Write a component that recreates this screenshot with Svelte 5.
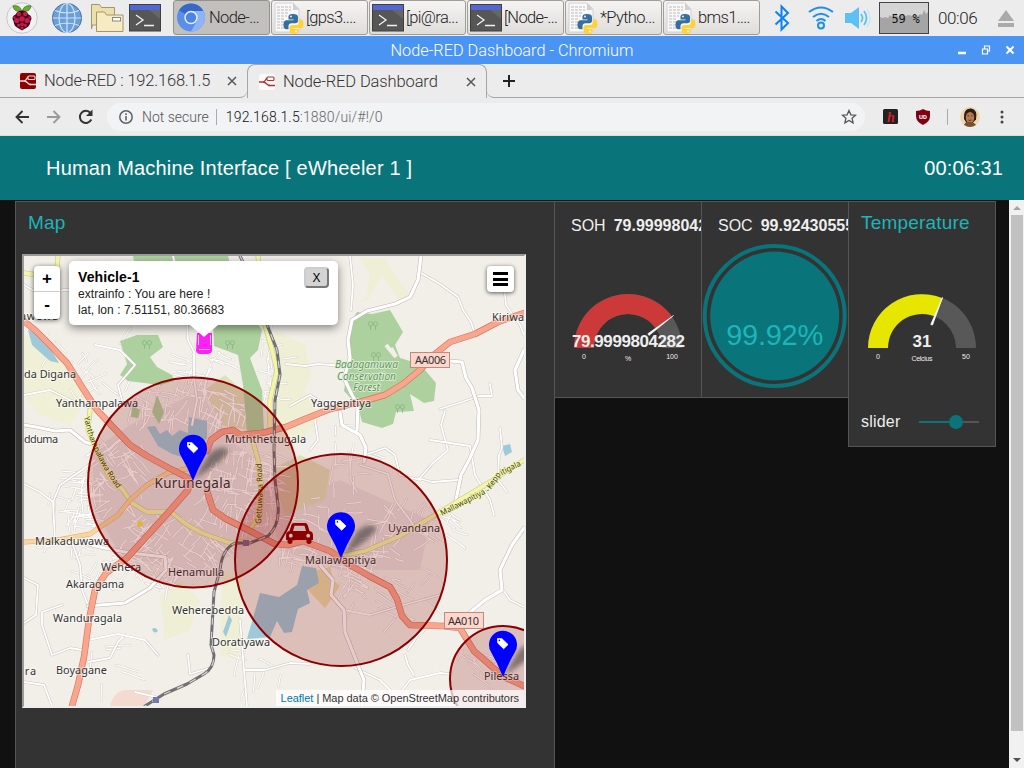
<script>
  const tasks = [
    { icon: 'chromium', label: 'Node-...', active: true },
    { icon: 'python', label: '[gps3....' },
    { icon: 'terminal', label: '[pi@ra...' },
    { icon: 'terminal', label: '[Node-...' },
    { icon: 'python', label: '*Pytho...' },
    { icon: 'python', label: 'bms1....' }
  ];

  // Deterministic side streets for the built-up areas of the map.
  function makeRandom(seed) {
    let s = seed;
    return () => {
      s = (s * 16807) % 2147483647;
      return s / 2147483647;
    };
  }
  function streets(cx, cy, rx, ry, count, seed, base) {
    const rnd = makeRandom(seed);
    let d = '';
    for (let i = 0; i < count; i++) {
      const a = rnd() * Math.PI * 2;
      const q = Math.sqrt(rnd());
      let x = cx + Math.cos(a) * q * rx;
      let y = cy + Math.sin(a) * q * ry;
      let dir = base + (rnd() < 0.5 ? 0 : Math.PI / 2) + (rnd() - 0.5) * 0.25;
      d += `M${x.toFixed(1)} ${y.toFixed(1)}`;
      const n = 2 + Math.floor(rnd() * 2);
      for (let j = 0; j < n; j++) {
        dir += (rnd() - 0.5) * 0.5;
        const l = 3 + rnd() * 7;
        x += Math.cos(dir) * l;
        y += Math.sin(dir) * l;
        d += `L${x.toFixed(1)} ${y.toFixed(1)}`;
      }
    }
    return d;
  }
  const fineStreets = [
    streets(190, 403, 58, 22, 65, 11, 0.3),
    streets(243, 485, 38, 46, 110, 23, 0.2),
    streets(120, 470, 27, 42, 45, 31, 0.9),
    streets(170, 545, 58, 34, 75, 47, 0.7),
    streets(325, 535, 60, 38, 75, 53, 0.1),
    streets(385, 580, 46, 44, 34, 61, 0.5),
    streets(75, 500, 28, 32, 40, 71, 0.1),
    streets(90, 355, 55, 40, 18, 83, 0.8),
    streets(195, 362, 30, 18, 20, 97, 0.4),
    streets(268, 360, 10, 46, 18, 101, 0.1),
    streets(345, 455, 24, 32, 16, 113, 0),
    streets(130, 568, 60, 18, 28, 127, 0.4),
    streets(245, 670, 40, 22, 8, 131, 0.2),
    streets(420, 515, 40, 28, 28, 149, 0.6),
    streets(60, 545, 32, 14, 10, 151, 0.2),
    streets(480, 660, 22, 22, 12, 157, 0.6),
    streets(100, 665, 24, 22, 6, 163, 0.1)
  ].join('');

  const minorRoads = [
    'M173 256L176 268L185 290L188 340L194 352L194 378L197 400L192 425',
    'M350 256L353 285L351 310',
    'M440 409L462 402L479 396L492 396L490 384',
    'M445 411L441 425L448 450L432 464L420 478',
    'M418 478L432 482L458 480',
    'M344 610L370 615L400 606L440 595',
    'M503 590L510 600L524 607',
    'M405 655L408 665L414 675M408 650L418 635L434 623',
    'M24 484L40 492L53 502L55 540M53 502L60 485L82 470L95 460',
    'M24 578L38 585L36 615L24 623',
    'M73 545L80 565L82 590L90 610',
    'M62 605L42 612L42 625L52 655L70 648L82 650',
    'M24 682L44 685L52 706',
    'M88 640L118 634L145 640L158 655',
    'M88 662L110 658L118 642L125 635',
    'M188 655L190 674L210 668M240 620L244 670L247 706',
    'M244 670L265 670L290 663L310 664M135 692L160 698',
    'M355 668L380 680L390 690M395 700L410 680L440 673L450 674',
    'M24 285L50 300L62 290L90 290L110 300L130 298',
    'M95 345L120 350L135 365L118 385L122 400',
    'M24 395L50 390L70 400L90 408',
    'M286 364L305 366L318 364L345 366',
    'M290 406L310 395L318 400M315 420L318 440L310 450',
    'M365 455L385 448L395 455L400 475L420 480',
    'M421 273L440 284L458 297L463 310L471 322L475 334',
    'M504 285L506 305L520 325L524 335',
    'M430 440L470 446L475 475L490 500L494 515',
    'M500 428L502 448L499 455L498 480L507 492',
    'M360 465L388 474L395 500L410 520L416 530'
  ].join('');
  const widerRoads = [
    'M421 256L418 280L410 297L395 304L367 311L352 320L348 340L350 358L344 378L352 395L358 405L357 430',
    'M340 412L342 425L360 435L366 448L364 462',
    'M450 361L462 362L466 378L472 388L479 410L478 440L469 460L461 475L455 505',
    'M524 350L515 370L518 390L524 398',
    'M320 565L333 580L331 595L344 610L345 632L354 655L364 680L362 706',
    'M524 528L512 545L500 570L502 590L485 600L468 614',
    'M24 425L36 427L55 431L70 430L85 442L98 446',
    'M73 539L95 546L130 553L165 557L166 570L150 588L125 603L88 606'
  ].join('');

  const mainRoads = [
    'M24 321L36 331L50 345L67 363L82 387L97 410L112 426L130 445L147 456L167 467L190 479',
    'M524 313L498 322L475 334L450 342L435 354L420 370L403 384L385 395L360 402L330 409L305 419L286 427L262 433L240 435L233 430L222 432L211 440L207 451',
    'M207 491L213 510L226 519L250 531L275 544L288 545L303 541L330 551L350 565L369 576L390 587L397 599L402 616L410 625L443 626L460 628L466 638L474 651L490 665L504 677L524 686',
    'M190 479L188 490L167 514L147 536L127 558L106 573L95 590L89 620L84 657L78 685L72 706'
  ].join('');

  const secondaryRoads =
    'M24 542L58 540L90 534L118 515L130 500L147 485L168 473L190 468';
  const yellowRoads =
    'M24 273L44 276L57 268L58 256M90 410L88 430L100 458L110 478L123 490L132 503L147 512L171 512L186 524L202 533L230 543L250 541M250 529L260 515L262 490L258 460L252 438M258 256L265 325L272 350L277 370L270 400L270 430M340 556L365 551L400 536L430 518L460 500L490 482L524 460';
  const railway =
    'M240 256L249 274L258 300L266 322L277 350L280 375L275 400L274 450L275 480L278 505Q280 525 268 536L250 543L235 543Q222 549 220 570L214 592L211 645L214 655Q214 668 204 674L187 684L164 694L145 706';

  const places = [
    { t: 'Kiriwa', x: 492, y: 321, w: 32 },
    { t: 'da Digana', x: 24, y: 378, w: 52 },
    { t: 'Yanthampalawa', x: 56, y: 407, w: 82 },
    { t: 'dduma', x: 24, y: 443, w: 34 },
    { t: 'Muththettugala', x: 225, y: 443, w: 81 },
    { t: 'Yaggepitiya', x: 311, y: 407, w: 60 },
    { t: 'Uyandana', x: 388, y: 532, w: 52 },
    { t: 'Malkaduwawa', x: 35, y: 545, w: 74 },
    { t: 'Wehera', x: 101, y: 571, w: 40 },
    { t: 'Akaragama', x: 66, y: 588, w: 58 },
    { t: 'Henamulla', x: 168, y: 576, w: 56 },
    { t: 'Wanduragala', x: 53, y: 622, w: 69 },
    { t: 'Weherebedda', x: 172, y: 614, w: 72 },
    { t: 'Doratiyawa', x: 212, y: 646, w: 58 },
    { t: 'ara', x: 18, y: 675, w: 18 },
    { t: 'Boyagane', x: 56, y: 674, w: 51 },
    { t: 'Mallawapitiya', x: 305, y: 564, w: 71 },
    { t: 'Pilessa', x: 484, y: 680, w: 35 },
    { t: 'awewa', x: 20, y: 320, w: 38 }
  ];
  const zones = [
    { x: 193, y: 482.5, r: 105 },
    { x: 341, y: 560, r: 106 },
    { x: 503, y: 679, r: 53 }
  ];
  const pins = [
    { x: 193, y: 434 },
    { x: 341, y: 511.5 },
    { x: 503, y: 630 }
  ];
  const trees = [
    [147, 345], [230, 345], [373, 326], [376, 357], [400, 409]
  ];
</script>

{#snippet terminalIcon()}
  <svg width="32" height="28" viewBox="0 0 32 28">
    <rect x=".5" y=".5" width="31" height="26.5" fill="#565656" stroke="#3f3f3f" />
    <path d="M20 6h11v9z" fill="#666" />
    <rect x="1" y="1" width="30" height="5" fill="#5267d4" />
    <path d="M7 11l7 5-7 5M15 21.500h10" fill="none" stroke="#f2f2f2" stroke-width="1.300" />
  </svg>
{/snippet}

{#snippet chromiumIcon()}
  <svg width="28" height="29" viewBox="0 0 28 29">
    <circle cx="14" cy="14.500" r="14" fill="#5b8ee8" />
    <path d="M14 14.500L2 7.300A14 14 0 0 1 26 7.300z" fill="#3767c8" />
    <path d="M14 8h12.400A14 14 0 0 1 14 28.500L20 18z" fill="#8eb4f5" />
    <circle cx="14" cy="14.500" r="6.700" fill="#e9f1fd" />
    <circle cx="14" cy="14.500" r="5.200" fill="#4b84e6" />
  </svg>
{/snippet}

{#snippet pythonIcon()}
  <svg width="30" height="32" viewBox="0 0 30 32">
    <path d="M1 1h18l6 6v23H1z" fill="#f8f8f8" stroke="#d2d2d2" />
    <path d="M19 1l6 7h-6z" fill="#cfcfcf" />
    <path d="M3 5h14M3 8h14M3 11h11M3 14h10M3 17h7M3 20h8M3 23h7M3 26h12" stroke="#bbb" stroke-dasharray="3 1" />
    <path d="M19 12c-4 0-4.500 1.500-4.500 3v2.500h5v.8h-7c-2 0-3 1.500-3 4.500s1 4.500 3 4.500h2v-3c0-2 1-3 3-3h4c1.700 0 2.500-1 2.500-2.500V15c0-2-1.500-3-5-3z" fill="#356f9f" />
    <path d="M20 32c4 0 4.500-1.500 4.500-3v-2h-5v-.8h7c2 0 3-1.500 3-4.500s-1-4.500-3-4.500h-1.500v2.800c0 2-1 3-3 3h-4c-1.700 0-2.500 1-2.500 2.500V29c0 2 1.500 3 4.500 3z" fill="#ffd23c" />
    <circle cx="17" cy="14.500" r=".9" fill="#fff" />
    <circle cx="22" cy="29.500" r=".9" fill="#fff" />
  </svg>
{/snippet}

{#snippet nodeRed(fg, bg)}
  <svg width="16" height="16" viewBox="0 0 16 16">
    <rect width="16" height="16" rx="2" fill={bg} />
    <path d="M0 8h4c3 0 2-4 5-4M4 8c4 0 3 3.500 7 3.500" fill="none" stroke={fg} stroke-width="1.300" />
    <rect x="8" y="3" width="7" height="3.500" rx="1" fill={bg} stroke={fg} stroke-width="1.100" />
    <path d="M9.500 11.500H16" stroke={fg} stroke-width="1.500" />
  </svg>
{/snippet}

<div class="screen">
  <div class="taskbar">
    <div class="launch">
      <svg width="32" height="32" viewBox="0 0 32 32">
        <circle cx="16" cy="16" r="15.300" fill="#f1f1f1" stroke="#c4c8cd" />
        <path d="M15.500 9.500C9 10 7.500 7 7 3.800c4-.5 8 .5 8.500 5.700zM16.500 9.500c6.500.500 8-2.500 8.500-5.700-4-.5-8 .5-8.500 5.700z" fill="#6aae2e" stroke="#27591b" stroke-width=".6" />
        <path d="M16 8.500c-3 0-5 1.500-6.500 4C6 14 6 17 7.500 19c.5 4 2 6 4.500 7l4 2.500 4-2.500c2.500-1 4-3 4.500-7 1.500-2 1.500-5-2-6.500-1.500-2.500-3.500-4-6.500-4z" fill="#42091b" />
        <g fill="#c51a4a">
          <circle cx="12.800" cy="12" r="2.300" /><circle cx="19.200" cy="12" r="2.300" />
          <circle cx="16" cy="17" r="2.800" /><circle cx="10.800" cy="18.500" r="2.600" /><circle cx="21.200" cy="18.500" r="2.600" />
          <circle cx="16" cy="22.300" r="1.900" /><circle cx="12.600" cy="23.300" r="1.600" /><circle cx="19.400" cy="23.300" r="1.600" />
          <circle cx="16" cy="26" r="1.500" /><circle cx="8.400" cy="15.500" r="1.200" /><circle cx="23.600" cy="15.500" r="1.200" />
        </g>
      </svg>
      <svg width="32" height="32" viewBox="0 0 32 32">
        <circle cx="16" cy="16" r="14.600" fill="#6a9fd8" stroke="#46719f" />
        <path d="M16 1.500v29M1.500 16h29M4 8.500q12 5 24 0M4 23.500q12-5 24 0" fill="none" stroke="#cfe2f7" stroke-width="1.200" />
        <ellipse cx="16" cy="16" rx="8" ry="14.500" fill="none" stroke="#cfe2f7" stroke-width="1.200" />
      </svg>
      <svg width="34" height="30" viewBox="0 0 34 30">
        <path d="M1.500 26V1.500h8l2 3h13V22h-22z" fill="#eddfad" stroke="#a3966c" />
        <path d="M6.500 28.500V9h8l2 3h16.500v16.500z" fill="#f6ebc1" stroke="#a3966c" />
        <rect x="22.500" y="14.500" width="8" height="3.500" fill="#fff" stroke="#888" />
      </svg>
      {@render terminalIcon()}
    </div>
    <div class="tasks">
      {#each tasks as task}
        <div class="task" class:active={task.active}>
          {#if task.icon === 'chromium'}{@render chromiumIcon()}{:else if task.icon === 'python'}{@render pythonIcon()}{:else}{@render terminalIcon()}{/if}
          <span>{task.label}</span>
        </div>
      {/each}
    </div>
    <div class="tray">
      <svg width="16" height="28" viewBox="0 0 16 28"><path d="M1.500 7.500L14 19l-6.500 6.500v-23L14 9 1.500 20.500" fill="none" stroke="#0a84f5" stroke-width="2" /></svg>
      <svg width="26" height="24" viewBox="0 0 26 24" fill="none" stroke="#1d8ff0" stroke-width="2">
        <path d="M1 6Q13-3 25 6M5 11q8-6.500 16 0M8.500 15q4.500-4 9 0" /><circle cx="13" cy="19.500" r="3" />
      </svg>
      <svg width="26" height="22" viewBox="0 0 26 22">
        <path d="M0 6h6l8-6v22l-8-6H0z" fill="#5cc0f5" />
        <path d="M16 7q3 4 0 8M19 4q5 7 0 14" fill="none" stroke="#5cc0f5" stroke-width="1.800" />
        <path d="M22 2q6 9 0 18" fill="none" stroke="#cde6f5" stroke-width="1.500" />
      </svg>
      <div class="cpu">
        <svg width="48" height="30" viewBox="0 0 48 30"><path d="M0 30V14l3 1 2-1 3 1 2-3 2 2 2-1 2-3 2 4 4-2 3 1 4-1 3 1 3-2 3 2 2-2 2 1 2-5 2 4 2-2V30z" fill="#a5a5a5" /></svg>
        <span>59 %</span>
      </div>
      <span class="clock">00:06</span>
      <svg width="16" height="17" viewBox="0 0 16 17"><path d="M8 0l8 11H0zM0 13h16v4H0z" fill="#aaa" /></svg>
    </div>
  </div>

  <div class="titlebar">
    <span>Node-RED Dashboard - Chromium</span>
    <svg width="56" height="10" viewBox="0 0 56 10" fill="none" stroke="#fff" stroke-width="2">
      <path d="M0 8h8" stroke-width="2.500" />
      <path d="M26.500 3.500V1h5v5h-2.500M24.500 4h5v5h-5z" stroke-width="1.200" />
      <path d="M48.500 1.500l7 7M55.500 1.500l-7 7" />
    </svg>
  </div>

  <div class="tabs">
    <div class="tab idle">
      {@render nodeRed('#f3dada', '#8f0000')}
      <span>Node-RED : 192.168.1.5</span>
      <svg class="close" width="10" height="10" viewBox="0 0 10 10"><path d="M1 1l8 8M9 1L1 9" stroke="#555" stroke-width="1.500" /></svg>
    </div>
    <div class="tab current">
      {@render nodeRed('#a33', '#fafafa')}
      <span>Node-RED Dashboard</span>
      <svg class="close" width="10" height="10" viewBox="0 0 10 10"><path d="M1 1l8 8M9 1L1 9" stroke="#555" stroke-width="1.500" /></svg>
    </div>
    <div class="newtab"><svg width="12" height="12" viewBox="0 0 12 12"><path d="M6 0v12M0 6h12" stroke="#222" stroke-width="2" /></svg></div>
  </div>

  <div class="toolbar">
    <svg width="14" height="14" viewBox="0 0 14 14"><path d="M14 7H1.500M7.500 1L1.500 7l6 6" fill="none" stroke="#333" stroke-width="1.900" /></svg>
    <svg width="14" height="14" viewBox="0 0 14 14"><path d="M0 7h12.500M6.500 1l6 6-6 6" fill="none" stroke="#9a9a9a" stroke-width="1.900" /></svg>
    <svg width="16" height="16" viewBox="0 0 16 16"><path d="M13.300 10.500A6 6 0 1 1 12.500 4" fill="none" stroke="#333" stroke-width="2" /><path d="M14.500.5v6.500H8z" fill="#333" /></svg>
    <div class="omni">
      <svg width="14" height="14" viewBox="0 0 14 14"><circle cx="7" cy="7" r="6.200" fill="none" stroke="#5f6368" stroke-width="1.500" /><path d="M7 6v4.500M7 3.300V5" stroke="#5f6368" stroke-width="1.600" /></svg>
      <span class="insecure">Not secure</span>
      <i></i>
      <span class="url">192.168.1.5<em>:1880/ui/#!/0</em></span>
      <svg class="star" width="16" height="16" viewBox="0 0 16 16"><path d="M8 1.500l1.900 4.300 4.700.4-3.500 3.100 1 4.600L8 11.500l-4.100 2.400 1-4.600L1.400 6.200l4.700-.4z" fill="none" stroke="#555" stroke-width="1.300" /></svg>
    </div>
    <svg width="15" height="15" viewBox="0 0 15 15"><rect width="15" height="15" rx="1.500" fill="#222" /><text x="4" y="12.500" font-family="Liberation Serif" font-style="italic" font-weight="700" font-size="14" fill="#d11f2d">h</text></svg>
    <svg width="16" height="16" viewBox="0 0 16 16"><path d="M8 0q3 2 7 2v5q0 6-7 9-7-3-7-9V2q4 0 7-2z" fill="#800010" /><text x="4" y="9.500" font-family="Roboto" font-weight="700" font-size="6" fill="#fff">UD</text></svg>
    <i class="rule"></i>
    <svg class="face" width="20" height="20" viewBox="0 0 20 20">
      <circle cx="10" cy="10" r="10" fill="#ecd7ae" />
      <path d="M4 12Q3 1 11 1.500q7 1 5 11l-4 4H7z" fill="#2c1d18" />
      <ellipse cx="10" cy="10.500" rx="4.200" ry="5.500" fill="#b97a50" />
      <path d="M4 18q2-4 6-3 4 0 6 3-6 4-12 0z" fill="#77502f" />
      <path d="M7.500 8.800h1.500M11 8.800h1.500M8.500 13q1.500 1 3 0" fill="none" stroke="#4a1f17" stroke-width=".8" />
    </svg>
    <svg width="4" height="14" viewBox="0 0 4 14" fill="#444"><circle cx="2" cy="2" r="1.500" /><circle cx="2" cy="7" r="1.500" /><circle cx="2" cy="12" r="1.500" /></svg>
  </div>

  <header><span>Human Machine Interface [ eWheeler 1 ]</span><span class="time">00:06:31</span></header>

  <main>
    <div class="board">
      <section class="group mapgroup">
        <h2>Map</h2>
        <div class="map">
          <svg class="canvas" width="500" height="450" viewBox="24 256 500 450">
            <defs><filter id="soft"><feGaussianBlur stdDeviation="2.600" /></filter></defs>
            <rect x="24" y="256" width="500" height="450" fill="#f2efe9" />
            <g fill="#eef0cf" opacity=".8">
              <path d="M24 335L45 338L70 375L86 400L70 425L40 415L24 395z" />
              <path d="M275 330L305 345L312 375L304 390L320 420L290 450L275 440z" />
              <path d="M360 258L370 275L366 298L357 302L368 300L382 275L398 300L410 295L392 270L385 258z" />
              <path d="M160 595L180 580L200 600L190 630L165 640z" />
              <path d="M222 570L243 575L238 660L220 655z" />
            </g>
            <g fill="#e6e2e0"><path d="M92 450L130 425L200 390L230 440L270 470L270 530L200 575L120 555L95 510z" /><path d="M270 510L340 480L430 520L420 570L340 570L280 550z" /></g>
            <g fill="#dfe0b9"><path d="M205 390L225 375L247 395L248 430L220 425z" /><path d="M270 470L300 455L330 470L325 500L285 515z" /></g>
            <path d="M110 706Q114 690 127 690H153L145 706z" fill="#f4dad0" />
            <g fill="none" stroke-linejoin="round" stroke-linecap="round">
              <path d={fineStreets} stroke="#d5d1cb" stroke-width="2.200" />
              <path d={fineStreets} stroke="#fff" stroke-width="1.200" />
            </g>
            <path d="M308 590L310 572L330 567L333 580L340 586L325 608z" fill="#e8dba8" />
            <g fill="#add19e">
              <path d="M133 256H228L240 300L262 330L258 350L250 358L262 390L264 432L247 432L243 385L238 355L214 346L213 320L190 300L140 290z" />
              <path d="M120 341L137 335L158 335L163 347L150 357L157 367L172 375L174 381L160 385L128 381L120 375L127 364z" />
              <path d="M157 395L164 412L159 424L152 412zM132 405L140 410L138 418L131 417z" />
              <path d="M357 312L372 314L390 310L403 332L395 345L400 358L420 364L436 383L434 401L424 403L410 394L414 411L396 412L393 424L382 428L362 422L358 406L344 391L349 355L349 325z" />
            </g>
            <path d="M386 345L396 357L391 348" stroke="#f2efe9" stroke-width="4" fill="none" />
            <g fill="#9fc9d9">
              <path d="M147 427L155 426L160 434L167 430L172 436L180 430L188 433L189 417L207 421L207 438L200 448L193 454L185 458L172 454L158 446z" />
              <path d="M260 593L279 597L297 585L302 566L316 568L319 583L307 590L310 603L298 609L292 632L284 633L277 621L270 637L247 639z" />
              <path d="M28 330L36 333L50 348L59 363L50 361L32 345z" />
              <path d="M502 446L510 444L512 452L505 456zM152 629Q156 626 158 631Q154 635 152 629zM229 615L232 620L226 637L223 632z" />
            </g>
            <g fill="none" stroke-linejoin="round" stroke-linecap="round">
              <path d={minorRoads} stroke="#cac6c0" stroke-width="2.800" />
              <path d={minorRoads} stroke="#fff" stroke-width="1.800" />
              <path d={widerRoads} stroke="#bcb8b2" stroke-width="4.200" />
              <path d={widerRoads} stroke="#fff" stroke-width="3.200" />
              <path d={yellowRoads} stroke="#c6c98e" stroke-width="5" />
              <path d={yellowRoads} stroke="#f3f6aa" stroke-width="3.800" />
              <path d={secondaryRoads} stroke="#d9ab70" stroke-width="5" />
              <path d={secondaryRoads} stroke="#f8d5a0" stroke-width="4" />
              <path d={mainRoads} stroke="#d8745c" stroke-width="6.500" />
              <path d={mainRoads} stroke="#f9a68f" stroke-width="5.300" />
              <path d={railway} stroke="#707070" stroke-width="3" />
              <path d={railway} stroke="#d5d5d5" stroke-width="1.200" stroke-dasharray="7 7" stroke-linecap="butt" />
            </g>
            <path d="M153 697h6v6h-6zM243 540h6v6h-6z" fill="#7777b0" />
            <circle cx="140" cy="524" r="3" fill="#f2e34e" />
            {#each trees as [x, y]}
              <path d="M{x - 2.500} {y + 4}V{y}M{x + 2.500} {y + 4}V{y}M{x - 4.500} {y - 2}a2 2.500 0 0 1 4 0a2 2 0 0 1-4 0zM{x + .5} {y - 2}a2 2.500 0 0 1 4 0a2 2 0 0 1-4 0z" fill="none" stroke="#86b47d" stroke-width=".8" />
            {/each}
            <g fill="#ffd6cc" stroke="#c08a7c"><rect x="410.500" y="352.500" width="39" height="15" /><rect x="444.500" y="612.500" width="39" height="16" /></g>
            <g class="code"><text x="415" y="364" textLength="31">AA006</text><text x="448" y="625" textLength="31">AA010</text></g>
            <g class="label">
              {#each places as p}<text x={p.x} y={p.y} textLength={p.w}>{p.t}</text>{/each}
              <text class="city" x="154.500" y="487.500" textLength="76">Kurunegala</text>
            </g>
            <g class="forest"><text x="335" y="368" textLength="63">Badagamuwa</text><text x="337" y="380" textLength="59">Conservation</text><text x="353" y="391" textLength="27">Forest</text></g>
            <defs>
              <path id="keppitigala" d="M442 516L489 492L500 476L530 461" />
              <path id="yantham" d="M84 417Q91 455 122 495" />
              <path id="gettuwana" d="M261 524L263 490L261 455" />
            </defs>
            <g class="street">
              <text><textPath href="#keppitigala" textLength="96" lengthAdjust="spacingAndGlyphs">Mallawapitiya - Keppitigala</textPath></text>
              <text><textPath href="#yantham" textLength="80" lengthAdjust="spacingAndGlyphs">Yanthampalawa Road</textPath></text>
              <text><textPath href="#gettuwana" textLength="61" lengthAdjust="spacingAndGlyphs">Gettuwana Road</textPath></text>
            </g>
            {#each zones as z}<circle cx={z.x} cy={z.y} r={z.r} fill="#8b0000" fill-opacity=".2" stroke="#8b0000" stroke-width="2" />{/each}
            <g transform="translate(286 523)">
              <path fill="#8b0000" fill-rule="evenodd" d="M8 0h11q2 0 2.700 2l1.800 6q3.500.5 3.500 4v5h-1.500v2.500q-2.500 3-5 0V17h-14v2.500q-2.500 3-5 0V17H0v-5q0-3.500 3.500-4l1.800-6Q6 0 8 0zM8.500 2.800L7 8h13l-1.500-5.200zM4.800 10.800a1.900 1.900 0 1 0 .01 0zM22.200 10.800a1.900 1.900 0 1 0 .01 0z" />
            </g>
            {#each pins as p}
              <path d="M{p.x} {p.y + 46}L{p.x + 16} {p.y + 20}Q{p.x + 29} {p.y + 9} {p.x + 36} {p.y + 17}Q{p.x + 31} {p.y + 27} {p.x} {p.y + 46}z" fill="#333" opacity=".55" filter="url(#soft)" />
              <path d="M{p.x} {p.y + 47}Q{p.x - 5} {p.y + 34} {p.x - 12} {p.y + 22}A14 14 0 1 1 {p.x + 12} {p.y + 22}Q{p.x + 5} {p.y + 34} {p.x} {p.y + 47}z" fill="#00f" />
              <path d="M{p.x - 5.500} {p.y + 8.500}l4.500.3 6 5.700-4.300 4.300-6-5.800z" fill="#fff" stroke="#fff" stroke-width=".8" stroke-linejoin="round" /><circle cx={p.x - 3.600} cy={p.y + 10.400} r=".8" fill="#00f" />
            {/each}
            <path d="M197 333h15v18q-1 3-4 3h-8q-3 0-4-3z" fill="#ff20f5" /><path d="M198.500 335v10M210.500 335v10M199 349.500h11" stroke="#f3c9ee" stroke-width="1" />
          </svg>
          <div class="zoom"><b>+</b><b>-</b></div>
          <div class="popup">
            <div><b>Vehicle-1</b><p>extrainfo : You are here !</p><p>lat, lon : 7.51151, 80.36683</p></div>
            <span class="dismiss">X</span>
          </div>
          <div class="layers"><i></i><i></i><i></i></div>
          <div class="credit"><span>Leaflet</span> | Map data © OpenStreetMap contributors</div>
        </div>
      </section>

      <section class="group small">
        <div class="reading"><span>SOH</span><b>79.9999804282</b></div>
        <svg class="dial" width="146" height="110" viewBox="555 270 146 110">
          <path d="M574 348A54 54 0 0 1 682 348H662A34 34 0 0 0 594 348z" fill="#585858" />
          <path d="M574 348A54 54 0 0 1 671.700 316.300L655.500 328A34 34 0 0 0 594 348z" fill="#cc3939" />
          <path d="M647.800 333.800L673.500 315.500 649 335.500z" fill="#fff" stroke="#fff" stroke-width=".6" />
          <text class="value" x="628.500" y="347" textLength="113">79.9999804282</text>
          <text x="584" y="359">0</text><text x="628" y="361">%</text><text x="672" y="359">100</text>
        </svg>
      </section>

      <section class="group small">
        <div class="reading"><span>SOC</span><b>99.924305555</b></div>
        <svg class="liquid" width="146" height="146" viewBox="702 243 146 146">
          <circle cx="774.700" cy="316" r="70" fill="none" stroke="#097479" stroke-width="4" /><circle cx="774.700" cy="316" r="64.500" fill="#097479" />
          <text x="774.700" y="345" textLength="97">99.92%</text>
        </svg>
      </section>

      <section class="group temp">
        <h2>Temperature</h2>
        <svg class="dial" width="146" height="110" viewBox="849 270 146 110">
          <path d="M868 348A54 54 0 0 1 976 348H956A34 34 0 0 0 888 348z" fill="#585858" />
          <path d="M868 348A54 54 0 0 1 942 298L934.500 316.300A34 34 0 0 0 888 348z" fill="#e6e600" />
          <path d="M930.800 324.500L942.500 297.500 932.500 325z" fill="#fff" stroke="#fff" stroke-width=".8" />
          <text class="value" x="922" y="347">31</text>
          <text x="878" y="359">0</text><text x="922" y="361" textLength="21">Celcius</text><text x="966" y="359">50</text>
        </svg>
        <div class="slider"><span>slider</span><div class="track"><i></i></div></div>
      </section>
    </div>
    <div class="scrollbar">
      <svg width="15" height="15" viewBox="0 0 15 15"><path d="M4 10l4-4 4 4z" fill="#a3a3a3" /></svg>
      <i></i>
      <svg width="15" height="15" viewBox="0 0 15 15"><path d="M4 5l4 4 4-4z" fill="#505050" /></svg>
    </div>
  </main>
</div>

<style>
  :global(body) { overflow: hidden; }
  .screen { width: 1024px; height: 768px; display: flex; flex-direction: column; overflow: hidden; background: #111; font-family: "Liberation Sans", Arial, sans-serif; }
  .screen :global(*) { box-sizing: border-box; }
  svg { display: block; flex: none; }

  .taskbar { height: 36px; flex: none; display: flex; background: #edecec; font: 300 17px Roboto, sans-serif; color: #222; }
  .launch { width: 173px; padding-left: 6px; display: flex; align-items: center; gap: 13px; }
  .launch svg:nth-child(3) { margin-left: -6px; }
  .launch svg:nth-child(4) { margin-left: -8px; }
  .tasks { width: 588px; display: flex; gap: 1px; padding-bottom: 1px; }
  .task { width: 97px; height: 35px; flex: none; padding-left: 3px; display: flex; align-items: center; gap: 2px; border: 1px solid #a19d98; border-radius: 3px; background: linear-gradient(#f5f4f3, #dfddda); white-space: nowrap; overflow: hidden; font-size: 16.500px; letter-spacing: -.65px; }
  .task.active { background: #c2c0bc; border-color: #94918d; gap: 4px; }
  .task:not(.active) svg { margin-left: -1px; }
  .tray { flex: 1; padding-left: 13px; display: flex; align-items: center; gap: 8px; }
  .tray > svg:nth-child(2) { margin: 0 3px 0 10px; }
  .cpu { width: 50px; height: 32px; flex: none; border: 1px solid #444; display: grid; background: #d4d4d4; }
  .cpu > * { grid-area: 1 / 1; }
  .cpu span { font: 12px/32px "DejaVu Sans Mono", monospace; letter-spacing: -.2px; text-align: center; color: #111; padding-left: 3px; }
  .clock { width: 50px; margin-left: 1px; letter-spacing: -.4px; }
  .tray > svg:last-child { margin-left: 2px; }

  .titlebar { height: 28px; flex: none; display: flex; align-items: center; justify-content: center; background: #4a95f3; color: #fff; font: 300 16.3px Roboto, sans-serif; padding-left: 66px; }
  .titlebar span { flex: 1; text-align: center; }
  .titlebar svg { margin-right: 10px; }

  .tabs { height: 34px; flex: none; display: flex; background: #ececec; font: 300 16.500px Roboto, sans-serif; letter-spacing: -.13px; color: #333; }
  .tab { display: flex; align-items: center; border-bottom: 1px solid #a6a6a6; }
  .idle { width: 247px; padding-left: 20px; border-radius: 0 0 7px 0; }
  .idle span { margin-left: 8px; flex: 1; letter-spacing: -.2px; }
  .idle .close { margin-right: 10px; }
  .current { width: 240px; padding-left: 11px; border: 1px solid #a6a6a6; border-bottom: 0; border-radius: 8px 8px 0 0; }
  .current span { margin-left: 8px; flex: 1; }
  .current .close { margin-right: 10px; }
  .newtab { flex: 1; display: flex; align-items: center; padding-left: 16px; border-bottom: 1px solid #a6a6a6; border-radius: 0 0 0 7px; }

  .toolbar { height: 38px; flex: none; display: flex; align-items: center; background: #ececec; padding-left: 15px; border-bottom: 1px solid #dcdcdc; }
  .toolbar > svg:nth-child(2) { margin-left: 18px; }
  .toolbar > svg:nth-child(3) { margin-left: 17px; }
  .omni { width: 758px; height: 28px; margin: 0 18px 0 13px; padding: 0 8px 0 12px; border-radius: 14px; background: #f1f3f4; display: flex; align-items: center; font: 300 14px Roboto, sans-serif; color: #444; }
  .insecure { margin-left: 9px; color: #555; }
  .omni i { width: 1px; height: 16px; background: #aaa; margin: 0 9px 0 7px; }
  .url { color: #111; flex: 1; letter-spacing: .17px; }
  .url em { font-style: normal; color: #666; }
  .toolbar > svg:nth-child(6) { margin-left: 17px; }
  .rule { width: 1px; height: 16px; background: #aaa; margin: 0 12px 0 16px; }
  .toolbar > svg:last-child { margin-left: 20px; }

  header { height: 64px; flex: none; padding: 0 21px 0 46px; display: flex; align-items: center; justify-content: space-between; background: #097479; color: #fff; font-size: 20px; letter-spacing: .19px; }
  .time { letter-spacing: .1px; }

  main { flex: 1; min-height: 0; display: flex; }
  .board { width: 1009px; padding: 1px 0 0 15px; display: flex; align-items: flex-start; }
  .group { flex: none; background: #333; border: 1px solid #555; margin-right: -1px; overflow: hidden; }
  h2 { margin: 0; padding: 8px 12px 0; font-size: 19px; line-height: 25px; font-weight: 400; color: #1cb5b9; letter-spacing: .2px; }
  .mapgroup { width: 540px; height: 620px; }
  .map { position: relative; width: 504px; height: 454px; margin: 19px 0 0 6px; border: 2px solid; border-color: #9a9a9a #eee #eee #9a9a9a; overflow: hidden; }
  .label, .code { font: 10.900px "Noto Sans", sans-serif; fill: #333; }
  .label text { paint-order: stroke; stroke: #fff; stroke-opacity: .55; stroke-width: 2px; }
  .label .city { font-size: 13.500px; }
  .forest { font: italic 10.200px "Noto Sans", sans-serif; fill: #5c9659; paint-order: stroke; stroke: #e4f0dc; stroke-width: 1.500px; }
  .street { font: 8px "Noto Sans", sans-serif; fill: #3c3a20; paint-order: stroke; stroke: #f3f6aa; stroke-width: 1.500px; }
  .zoom { position: absolute; left: 10px; top: 10px; width: 26px; height: 53px; border-radius: 4px; background: #fff; box-shadow: 0 1px 5px rgba(0,0,0,.65); font-size: 17px; line-height: 25px; text-align: center; }
  .zoom b { display: block; height: 26px; }
  .zoom b:first-child { border-bottom: 1px solid #ccc; }
  .popup { position: absolute; left: 45px; top: 5px; width: 269px; height: 64px; padding: 8px 9px; background: #fff; border-radius: 5px; display: flex; justify-content: space-between; box-shadow: 0 3px 10px rgba(0,0,0,.45); font-size: 12px; line-height: 16px; color: #222; }
  .popup::after { content: ""; position: absolute; left: 121px; top: 64px; border: 14px solid transparent; border-top: 12px solid #fff; border-bottom: 0; }
  .popup b { display: block; font-size: 14px; line-height: 17px; color: #000; letter-spacing: .1px; }
  .popup p { margin: 0; letter-spacing: .06px; }
  .dismiss { width: 25px; height: 21px; margin-top: -2px; background: #d4d4d4; border: 2px outset #ccc; border-radius: 4px; text-align: center; line-height: 18px; color: #000; }
  .layers { position: absolute; right: 10px; top: 10px; width: 27px; height: 26px; padding: 6px; display: flex; flex-direction: column; gap: 2.500px; background: #fff; border-radius: 4px; box-shadow: 0 1px 4px rgba(0,0,0,.65); }
  .layers i { height: 3px; flex: none; background: #000; }
  .credit { position: absolute; right: 0; bottom: 0; height: 16px; padding: 0 5px; background: rgba(255,255,255,.72); font-size: 11px; letter-spacing: -.04px; line-height: 16px; color: #333; white-space: nowrap; }
  .credit span { color: #0078a8; }

  .small { width: 148px; height: 197px; }
  .reading { height: 48px; padding-left: 16px; display: flex; align-items: center; gap: 8px; font-size: 16px; color: #eee; white-space: nowrap; }
  .dial { margin-top: 20px; font-size: 7px; fill: #eee; text-anchor: middle; }
  .dial .value { font-size: 17px; font-weight: 700; }
  .liquid { margin-top: -7px; font-size: 29px; fill: #1cb5b9; text-anchor: middle; }
  .temp { width: 148px; height: 246px; }
  .temp .dial { margin-top: 35px; }
  .slider { height: 34px; margin-top: 25px; padding-left: 12px; display: flex; align-items: center; color: #eee; font-size: 16px; letter-spacing: .2px; }
  .slider span { width: 58px; }
  .track { width: 60px; height: 2px; background: linear-gradient(90deg, #097479 37px, #555 37px); display: flex; align-items: center; }
  .track i { width: 14px; height: 14px; flex: none; border-radius: 50%; background: #097479; margin-left: 30px; }
  .scrollbar { width: 15px; flex: none; background: #f1f1f1; display: flex; flex-direction: column; }
  .scrollbar i { height: 516px; margin: 0 1px 0 2px; background: #c1c1c1; }
  .scrollbar svg:last-child { margin-top: auto; }
</style>
